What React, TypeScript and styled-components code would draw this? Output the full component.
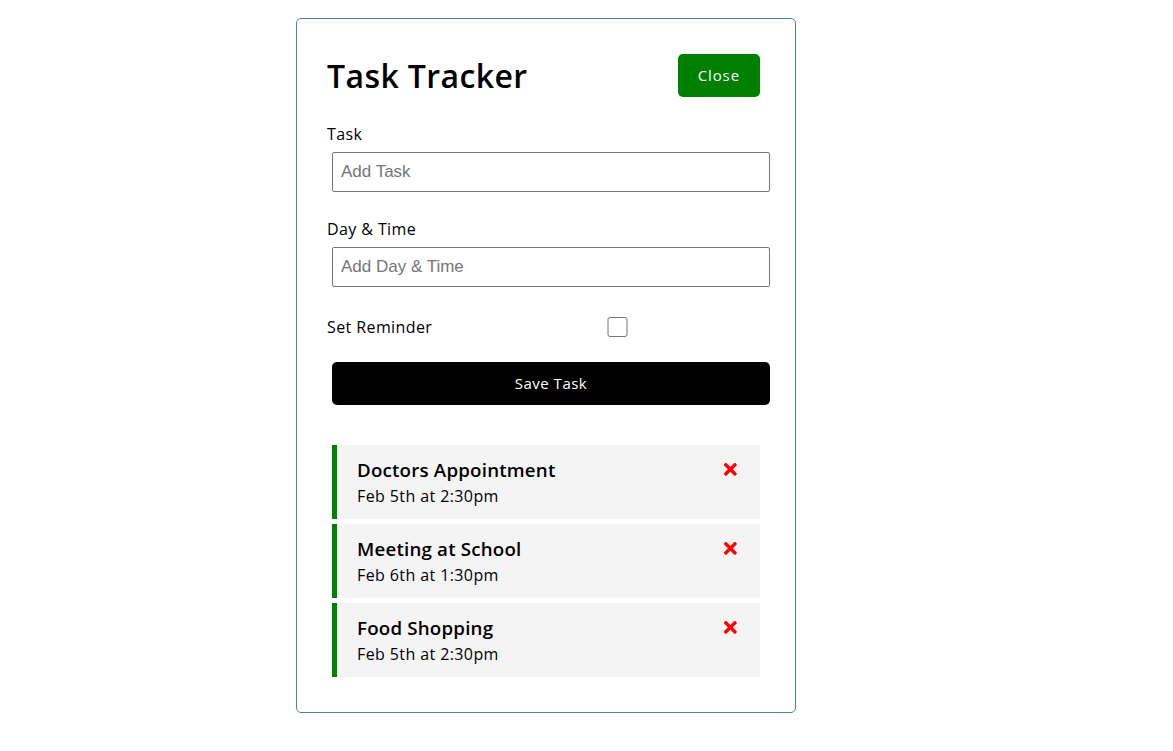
import React, { useState } from 'react';
import styled, { createGlobalStyle } from 'styled-components';
import { FaTimes } from 'react-icons/fa';

const GlobalStyle = createGlobalStyle`
  * {
    box-sizing: border-box;
    margin: 0;
    padding: 0;
  }
  body {
    font-family: 'Open Sans', 'Liberation Sans', sans-serif;
    letter-spacing: 0.4px;
    line-height: 1.5625;
    background: #fff;
    color: #000;
  }
`;

interface Task {
  id: number;
  text: string;
  day: string;
  reminder: boolean;
}

const initialTasks: Task[] = [
  { id: 1, text: 'Doctors Appointment', day: 'Feb 5th at 2:30pm', reminder: true },
  { id: 2, text: 'Meeting at School', day: 'Feb 6th at 1:30pm', reminder: true },
  { id: 3, text: 'Food Shopping', day: 'Feb 5th at 2:30pm', reminder: true },
];

const App = () => {
  const [tasks, setTasks] = useState<Task[]>(initialTasks);
  const [reminder, setReminder] = useState(false);

  // 삭제
  const deleteTask = (id: number) => setTasks(tasks.filter((t) => t.id !== id));

  // 리마인더 토글
  const toggleReminder = (id: number) =>
    setTasks(tasks.map((t) => (t.id === id ? { ...t, reminder: !t.reminder } : t)));

  return (
    <>
      <GlobalStyle />
      <Container>
        <Header>
          <Title>Task Tracker</Title>
          <Button color="green">Close</Button>
        </Header>

        <AddForm onSubmit={(e) => e.preventDefault()}>
          <FormControl>
            <Label>Task</Label>
            <TextInput type="text" placeholder="Add Task" />
          </FormControl>
          <FormControl>
            <Label>Day &amp; Time</Label>
            <TextInput type="text" placeholder="Add Day & Time" />
          </FormControl>
          <CheckControl>
            <CheckLabel>Set Reminder</CheckLabel>
            <CheckInput type="checkbox" checked={reminder} onChange={(e) => setReminder(e.currentTarget.checked)} />
          </CheckControl>
          <BlockButton type="submit">Save Task</BlockButton>
        </AddForm>

        {tasks.map((task) => (
          <TaskItem key={task.id} reminder={task.reminder} onDoubleClick={() => toggleReminder(task.id)}>
            <TaskTitle>
              {task.text}
              <DeleteIcon onClick={() => deleteTask(task.id)} />
            </TaskTitle>
            <TaskDay>{task.day}</TaskDay>
          </TaskItem>
        ))}
      </Container>
    </>
  );
};

export default App;

const Container = styled.div`
  width: 500px;
  margin: 18px 0 0 296px;
  padding: 30px;
  min-height: 300px;
  border: 1px solid steelblue;
  border-radius: 5px;
`;

const Header = styled.header`
  display: flex;
  justify-content: space-between;
  align-items: center;
  margin-bottom: 20px;
`;

const Title = styled.h1`
  font-size: 32px;
  font-weight: 600;
  letter-spacing: 0.4px;
`;

const Button = styled.button<{ color?: string }>`
  display: inline-block;
  background: ${(props) => props.color || '#000'};
  color: #fff;
  border: none;
  padding: 10px 20px;
  margin: 5px;
  border-radius: 5px;
  cursor: pointer;
  font-size: 15px;
  line-height: 23px;
  font-family: inherit;
  letter-spacing: 0.9px;
`;

const BlockButton = styled(Button)`
  display: block;
  width: 100%;
  letter-spacing: 0.5px;
`;

const AddForm = styled.form`
  margin-bottom: 40px;
`;

const FormControl = styled.div`
  margin: 20px 0;
`;

const Label = styled.label`
  display: block;
  font-size: 16px;
`;

const TextInput = styled.input`
  width: 100%;
  height: 40px;
  margin: 5px;
  padding: 3px 8px;
  font-size: 17px;
  font-family: 'Liberation Sans', Arial, sans-serif;
  letter-spacing: 0;
  border: 1px solid #767676;
  border-radius: 2px;
  &::placeholder {
    color: #757575;
  }
`;

const CheckControl = styled(FormControl)`
  display: flex;
  align-items: center;
  justify-content: space-between;
`;

const CheckLabel = styled.label`
  flex: 1;
  font-size: 16px;
`;

const CheckInput = styled.input`
  flex: 2;
  height: 20px;
  margin: 5px;
  accent-color: #000;
`;

const TaskItem = styled.div<{ reminder: boolean }>`
  background: #f4f4f4;
  margin: 5px;
  padding: 10px 20px;
  cursor: pointer;
  border-left: 5px solid ${(props) => (props.reminder ? 'green' : 'transparent')};
`;

const TaskTitle = styled.h3`
  display: flex;
  align-items: center;
  justify-content: space-between;
  font-size: 18.72px;
  font-weight: 600;
  line-height: 29px;
  letter-spacing: 0.2px;
`;

const TaskDay = styled.p`
  font-size: 16px;
  line-height: 25px;
`;

const DeleteIcon = styled(FaTimes)`
  color: red;
  cursor: pointer;
  font-size: 18.72px;
`;
